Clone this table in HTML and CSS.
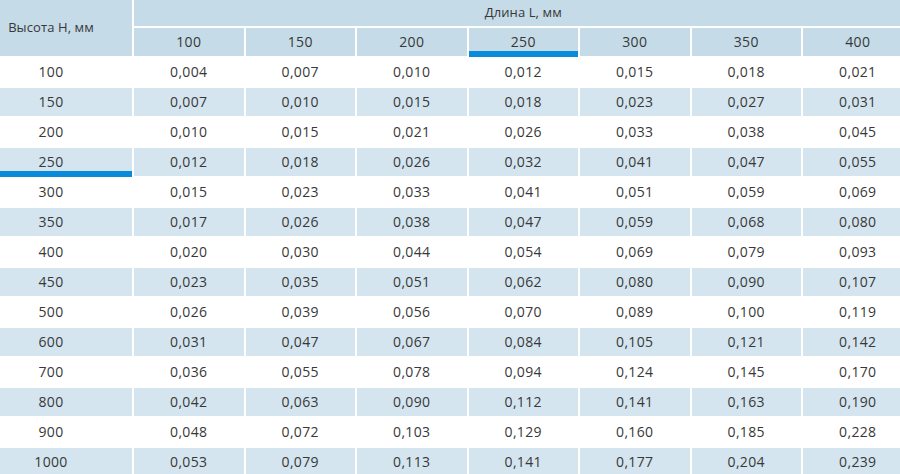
FILE: index.html
```html
<!DOCTYPE html>
<html lang="ru">
<head>
<meta charset="utf-8">
<title>Таблица</title>
<link rel="stylesheet" href="styles.css">
</head>
<body>
<div class="wrap">
<table class="grid">
<colgroup>
<col class="c-first">
<col class="c"><col class="c"><col class="c"><col class="c"><col class="c"><col class="c"><col class="c">
</colgroup>
<thead>
<tr>
<th rowspan="2" class="hcell">Высота Н, мм</th>
<th colspan="7" class="hcell">Длина L, мм</th>
</tr>
<tr>
<th class="hcell">100</th>
<th class="hcell">150</th>
<th class="hcell">200</th>
<th class="hcell mark">250</th>
<th class="hcell">300</th>
<th class="hcell">350</th>
<th class="hcell">400</th>
</tr>
</thead>
<tbody>
<tr><td>100</td><td>0,004</td><td>0,007</td><td>0,010</td><td>0,012</td><td>0,015</td><td>0,018</td><td>0,021</td></tr>
<tr class="alt"><td>150</td><td>0,007</td><td>0,010</td><td>0,015</td><td>0,018</td><td>0,023</td><td>0,027</td><td>0,031</td></tr>
<tr><td>200</td><td>0,010</td><td>0,015</td><td>0,021</td><td>0,026</td><td>0,033</td><td>0,038</td><td>0,045</td></tr>
<tr class="alt"><td class="mark">250</td><td>0,012</td><td>0,018</td><td>0,026</td><td>0,032</td><td>0,041</td><td>0,047</td><td>0,055</td></tr>
<tr><td>300</td><td>0,015</td><td>0,023</td><td>0,033</td><td>0,041</td><td>0,051</td><td>0,059</td><td>0,069</td></tr>
<tr class="alt"><td>350</td><td>0,017</td><td>0,026</td><td>0,038</td><td>0,047</td><td>0,059</td><td>0,068</td><td>0,080</td></tr>
<tr><td>400</td><td>0,020</td><td>0,030</td><td>0,044</td><td>0,054</td><td>0,069</td><td>0,079</td><td>0,093</td></tr>
<tr class="alt"><td>450</td><td>0,023</td><td>0,035</td><td>0,051</td><td>0,062</td><td>0,080</td><td>0,090</td><td>0,107</td></tr>
<tr><td>500</td><td>0,026</td><td>0,039</td><td>0,056</td><td>0,070</td><td>0,089</td><td>0,100</td><td>0,119</td></tr>
<tr class="alt"><td>600</td><td>0,031</td><td>0,047</td><td>0,067</td><td>0,084</td><td>0,105</td><td>0,121</td><td>0,142</td></tr>
<tr><td>700</td><td>0,036</td><td>0,055</td><td>0,078</td><td>0,094</td><td>0,124</td><td>0,145</td><td>0,170</td></tr>
<tr class="alt"><td>800</td><td>0,042</td><td>0,063</td><td>0,090</td><td>0,112</td><td>0,141</td><td>0,163</td><td>0,190</td></tr>
<tr><td>900</td><td>0,048</td><td>0,072</td><td>0,103</td><td>0,129</td><td>0,160</td><td>0,185</td><td>0,228</td></tr>
<tr class="alt"><td>1000</td><td>0,053</td><td>0,079</td><td>0,113</td><td>0,141</td><td>0,177</td><td>0,204</td><td>0,239</td></tr>
</tbody>
</table>
</div>
</body>
</html>
```
FILE: styles.css
```css
html, body {
  margin: 0;
  padding: 0;
  background: #ffffff;
}
body {
  width: 900px;
  height: 474px;
  overflow: hidden;
  font-family: "Open Sans", "Noto Sans", sans-serif;
  font-size: 14px;
  color: #383838;
}
.wrap {
  width: 900px;
  overflow: hidden;
}
.grid {
  margin: -4px 0 0 -32px;
  border-collapse: separate;
  border-spacing: 2px;
  table-layout: fixed;
  width: 944.5px;
}
.c-first { width: 162px; }
.c { width: 109.5px; }
.grid th,
.grid td {
  height: 28px;
  padding: 0;
  text-align: center;
  vertical-align: middle;
  font-weight: 400;
  line-height: 18px;
  letter-spacing: 0.35px;
  position: relative;
}
.grid th {
  background: #c5dbe8;
  font-size: 13px;
  letter-spacing: 0.1px;
}
.grid thead tr:last-child th {
  font-size: 14px;
  letter-spacing: 0.35px;
}
.grid tr.alt td {
  background: #d4e5ef;
}
.mark::after {
  content: "";
  position: absolute;
  left: 0;
  right: 0;
  bottom: -1px;
  height: 6px;
  background: #0a8bd9;
}
```
